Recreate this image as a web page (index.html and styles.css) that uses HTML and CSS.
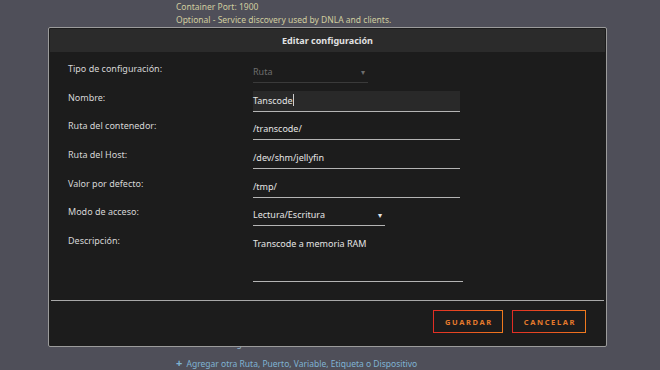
FILE: index.html
```html
<!DOCTYPE html>
<html lang="es">
<head>
    <meta charset="UTF-8">
    <title>Editar configuración</title>
    <link rel="stylesheet" href="styles.css">
</head>
<body>

    <div class="page">
        <div class="hint">Container Port: 1900</div>
        <div class="hint">Optional - Service discovery used by DNLA and clients.</div>
        <div class="behind">+ Mostrar configuraciones avanzadas ...</div>
        <div class="add-link"><span class="plus">+</span> Agregar otra Ruta, Puerto, Variable, Etiqueta o Dispositivo</div>
    </div>

    <div class="modal">
        <div class="modal-title">Editar configuración</div>

        <div class="modal-body">
            <div class="row">
                <label>Tipo de configuración:</label>
                <div class="select disabled short">Ruta <span class="arrow">&#9662;</span></div>
            </div>
            <div class="row">
                <label>Nombre:</label>
                <div class="field focused">Tanscode<span class="caret"></span></div>
            </div>
            <div class="row">
                <label>Ruta del contenedor:</label>
                <div class="field">/transcode/</div>
            </div>
            <div class="row">
                <label>Ruta del Host:</label>
                <div class="field">/dev/shm/jellyfin</div>
            </div>
            <div class="row">
                <label>Valor por defecto:</label>
                <div class="field">/tmp/</div>
            </div>
            <div class="row">
                <label>Modo de acceso:</label>
                <div class="select mid">Lectura/Escritura <span class="arrow">&#9662;</span></div>
            </div>
            <div class="row">
                <label>Descripción:</label>
                <div class="field area">Transcode a memoria RAM</div>
            </div>
        </div>

        <div class="modal-footer">
            <button class="btn">GUARDAR</button>
            <button class="btn">CANCELAR</button>
        </div>
    </div>

</body>
</html>
```

FILE: styles.css
```css
body {
    margin: 0;
    background-color: #4f4f59;
    font-family: 'Noto Sans', 'Open Sans', sans-serif;
    font-size: 9px;
    color: #ddd;
}

.page {
    width: 660px;
    height: 370px;
    padding-left: 176px;
    box-sizing: border-box;
    display: flex;
    flex-direction: column;
}

.hint {
    color: #cfcd9f;
    font-size: 8.5px;
    line-height: 13px;
}

.behind {
    margin-top: 312px;
    color: #8fb4cc;
    font-size: 8.5px;
    line-height: 12px;
}

.add-link {
    margin-top: 7px;
    color: #7fb3d3;
    font-size: 8.5px;
    line-height: 11px;
}

.plus {
    font-weight: bold;
    font-size: 11px;
    margin-right: 2px;
}

.modal {
    position: absolute;
    left: 48px;
    top: 27px;
    width: 557px;
    height: 318px;
    border: 1px solid #9b9b9b;
    border-radius: 2px;
    background-color: #1c1c1c;
    display: flex;
    flex-direction: column;
}

.modal-title {
    margin: 1px 1px 0 1px;
    height: 23px;
    line-height: 23px;
    background-color: #2b2b2b;
    text-align: center;
    font-weight: bold;
    color: #e2e2e2;
}

.modal-body {
    padding: 10px 0 0 19px;
    display: flex;
    flex-direction: column;
    gap: 7.7px;
}

.row {
    display: flex;
    align-items: flex-start;
}

.row label {
    width: 185px;
    line-height: 14px;
    color: #d6d6d6;
}

.field {
    width: 207px;
    height: 20px;
    line-height: 20px;
    border-bottom: 1px solid #b4b4b4;
    color: #e4e4e4;
}

.field.focused {
    background-color: #292929;
}

.caret {
    display: inline-block;
    width: 1px;
    height: 12px;
    background-color: #ccc;
    vertical-align: -2px;
}

.field.area {
    width: 210px;
    height: 47px;
    line-height: 20px;
}

.select {
    height: 20px;
    line-height: 20px;
    border-bottom: 1px solid #b4b4b4;
    display: flex;
    justify-content: space-between;
    color: #e4e4e4;
}

.select.short {
    width: 115px;
}

.select.mid {
    width: 132px;
}

.select.disabled {
    color: #6e6e6e;
    border-bottom-color: #3a3a3a;
}

.arrow {
    font-size: 8px;
    padding-right: 3px;
}

.modal-footer {
    margin: auto 2px 0 2px;
    border-top: 1px solid #a8a8a8;
    padding: 9px 18px 13px 0;
    display: flex;
    justify-content: flex-end;
    gap: 9px;
}

.btn {
    height: 23px;
    padding: 0 9px 0 11px;
    background-color: transparent;
    border: 1px solid;
    border-image: linear-gradient(90deg, #e22d24, #f07a1e) 1;
    color: #e57a2c;
    font-family: 'Noto Sans', sans-serif;
    font-size: 7.5px;
    font-weight: bold;
    letter-spacing: 1.6px;
    cursor: pointer;
}
```
